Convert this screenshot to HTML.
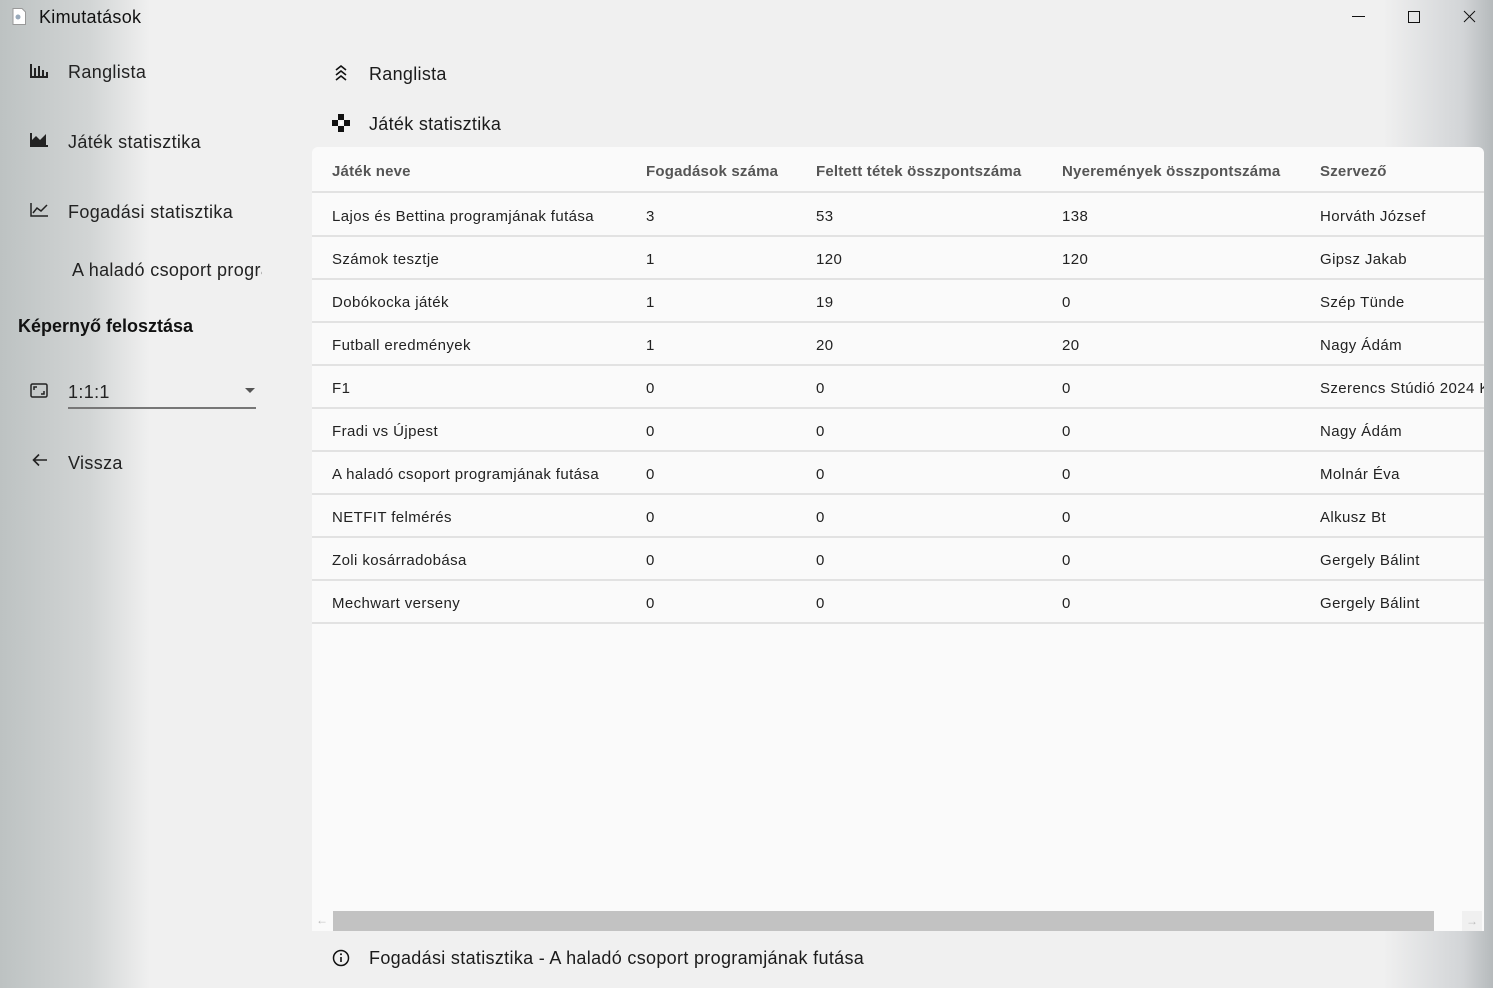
<!DOCTYPE html>
<html><head><meta charset="utf-8"><style>
*{margin:0;padding:0;box-sizing:border-box}
body{width:1493px;height:988px;overflow:hidden;position:relative;font-family:"Segoe UI","Liberation Sans",sans-serif;color:#1b1b1b;
background:
linear-gradient(90deg,rgba(180,186,186,.85) 0px,rgba(190,195,195,.6) 90px,rgba(240,240,240,0) 150px),
linear-gradient(270deg,rgba(175,180,182,.9) 0px,rgba(190,194,198,.6) 30px,rgba(240,240,240,0) 110px),
#f0f0f0;}
.t{position:absolute;white-space:nowrap}
.nav{font-size:18px;color:#222;letter-spacing:.35px}
.panel{position:absolute;left:312px;top:147px;width:1172px;height:784px;background:#fafafa;border-radius:6px 6px 0 0;overflow:hidden}
.row{position:absolute;left:0;width:1172px;height:43px;border-bottom:2px solid #e2e2e2;font-size:15px;color:#222;letter-spacing:.4px}
.row span{position:absolute;top:14px;white-space:nowrap}
.hd{color:#555;font-weight:600;letter-spacing:.2px}
</style></head><body>
<svg class="t" style="left:12px;top:8px" width="14" height="17" viewBox="0 0 14 17"><path d="M1 .5h9l3.5 3.5v12.5H1z" fill="#fff" stroke="#999"/><circle cx="6" cy="9" r="2.5" fill="#9ab"/></svg>
<div class="t" style="left:39px;top:7px;font-size:18px;color:#111;letter-spacing:.3px">Kimutatások</div>
<svg class="t" style="left:1350px;top:9px" width="130" height="16"><path d="M2 7.5h13" stroke="#111"/><rect x="58.5" y="2.5" width="11" height="11" fill="none" stroke="#111"/><path d="M114 2l11 11M125 2l-11 11" stroke="#111"/></svg>

<svg class="t" style="left:30px;top:63px" width="18" height="16"><path d="M1 1v13h17" stroke="#222" stroke-width="2" fill="none"/><path d="M5 5v8M9 3v10M13 7v6M17 9v4" stroke="#222" stroke-width="2"/></svg>
<div class="t nav" style="left:68px;top:62px">Ranglista</div>
<svg class="t" style="left:30px;top:132px" width="18" height="16"><path d="M1 1v13h17" stroke="#222" stroke-width="2" fill="none"/><path d="M2 13V8l4-4 4 4 6-6v11z" fill="#222"/></svg>
<div class="t nav" style="left:68px;top:132px">Játék statisztika</div>
<svg class="t" style="left:30px;top:202px" width="18" height="16"><path d="M1 1v13h17" stroke="#222" stroke-width="1.5" fill="none"/><path d="M3 11l4-5 4 3 6-6" stroke="#222" stroke-width="1.5" fill="none"/></svg>
<div class="t nav" style="left:68px;top:202px">Fogadási statisztika</div>
<div class="t nav" style="left:72px;top:260px;width:190px;overflow:hidden">A haladó csoport programjának</div>
<div class="t" style="left:18px;top:316px;font-size:18px;font-weight:600;color:#111">Képernyő felosztása</div>
<svg class="t" style="left:30px;top:383px" width="18" height="15"><rect x="1" y="1" width="16" height="13" rx="1.5" fill="none" stroke="#222" stroke-width="1.5"/><path d="M4 7V4h3M14 8v3h-3" stroke="#222" stroke-width="1.5" fill="none"/></svg>
<div class="t nav" style="left:68px;top:382px">1:1:1</div>
<div class="t" style="left:245px;top:388px;width:0;height:0;border-left:5px solid transparent;border-right:5px solid transparent;border-top:5px solid #555"></div>
<div class="t" style="left:68px;top:407px;width:188px;height:2px;background:#777"></div>
<svg class="t" style="left:32px;top:453px" width="16" height="14"><path d="M15 7H2M7 1.5L1.5 7 7 12.5" stroke="#222" stroke-width="1.6" fill="none"/></svg>
<div class="t nav" style="left:68px;top:453px">Vissza</div>

<svg class="t" style="left:334px;top:64px" width="14" height="17"><path d="M2 6l5-4 5 4M2 11l5-4 5 4M2 16l5-4 5 4" stroke="#111" stroke-width="1.6" fill="none"/></svg>
<div class="t" style="left:369px;top:64px;font-size:18px;letter-spacing:.3px">Ranglista</div>
<svg class="t" style="left:332px;top:114px" width="18" height="18"><rect x="6" y="0" width="6" height="6" fill="#111"/><rect x="0" y="6" width="6" height="6" fill="#111"/><rect x="12" y="6" width="6" height="6" fill="#111"/><rect x="6" y="12" width="6" height="6" fill="#111"/><circle cx="9" cy="9" r="1.5" fill="#fff"/></svg>
<div class="t" style="left:369px;top:114px;font-size:18px;letter-spacing:.3px">Játék statisztika</div>

<div class="panel">
<div class="row hd" style="top:0;height:46px"><span style="left:20px;top:16px">Játék neve</span><span style="left:334px;top:16px">Fogadások száma</span><span style="left:504px;top:16px">Feltett tétek összpontszáma</span><span style="left:750px;top:16px">Nyeremények összpontszáma</span><span style="left:1008px;top:16px">Szervező</span></div>
<div class="row" style="top:47px"><span style="left:20px">Lajos és Bettina programjának futása</span><span style="left:334px">3</span><span style="left:504px">53</span><span style="left:750px">138</span><span style="left:1008px">Horváth József</span></div>
<div class="row" style="top:90px"><span style="left:20px">Számok tesztje</span><span style="left:334px">1</span><span style="left:504px">120</span><span style="left:750px">120</span><span style="left:1008px">Gipsz Jakab</span></div>
<div class="row" style="top:133px"><span style="left:20px">Dobókocka játék</span><span style="left:334px">1</span><span style="left:504px">19</span><span style="left:750px">0</span><span style="left:1008px">Szép Tünde</span></div>
<div class="row" style="top:176px"><span style="left:20px">Futball eredmények</span><span style="left:334px">1</span><span style="left:504px">20</span><span style="left:750px">20</span><span style="left:1008px">Nagy Ádám</span></div>
<div class="row" style="top:219px"><span style="left:20px">F1</span><span style="left:334px">0</span><span style="left:504px">0</span><span style="left:750px">0</span><span style="left:1008px">Szerencs Stúdió 2024 Kft</span></div>
<div class="row" style="top:262px"><span style="left:20px">Fradi vs Újpest</span><span style="left:334px">0</span><span style="left:504px">0</span><span style="left:750px">0</span><span style="left:1008px">Nagy Ádám</span></div>
<div class="row" style="top:305px"><span style="left:20px">A haladó csoport programjának futása</span><span style="left:334px">0</span><span style="left:504px">0</span><span style="left:750px">0</span><span style="left:1008px">Molnár Éva</span></div>
<div class="row" style="top:348px"><span style="left:20px">NETFIT felmérés</span><span style="left:334px">0</span><span style="left:504px">0</span><span style="left:750px">0</span><span style="left:1008px">Alkusz Bt</span></div>
<div class="row" style="top:391px"><span style="left:20px">Zoli kosárradobása</span><span style="left:334px">0</span><span style="left:504px">0</span><span style="left:750px">0</span><span style="left:1008px">Gergely Bálint</span></div>
<div class="row" style="top:434px"><span style="left:20px">Mechwart verseny</span><span style="left:334px">0</span><span style="left:504px">0</span><span style="left:750px">0</span><span style="left:1008px">Gergely Bálint</span></div>
<div style="position:absolute;left:21px;top:764px;width:1101px;height:20px;background:#c2c2c2"></div>
<div style="position:absolute;left:4px;top:766px;font-size:12px;color:#bbb">←</div>
<div style="position:absolute;left:1150px;top:764px;width:20px;height:20px;background:#f0f0f0;color:#bbb;font-size:12px;text-align:center;line-height:20px">→</div>
</div>

<svg class="t" style="left:332px;top:949px" width="18" height="18"><circle cx="9" cy="9" r="7.5" fill="none" stroke="#111" stroke-width="1.5"/><path d="M9 8v5" stroke="#111" stroke-width="1.6"/><circle cx="9" cy="5.3" r="1" fill="#111"/></svg>
<div class="t" style="left:369px;top:948px;font-size:18px;letter-spacing:.32px">Fogadási statisztika - A haladó csoport programjának futása</div>
</body></html>
